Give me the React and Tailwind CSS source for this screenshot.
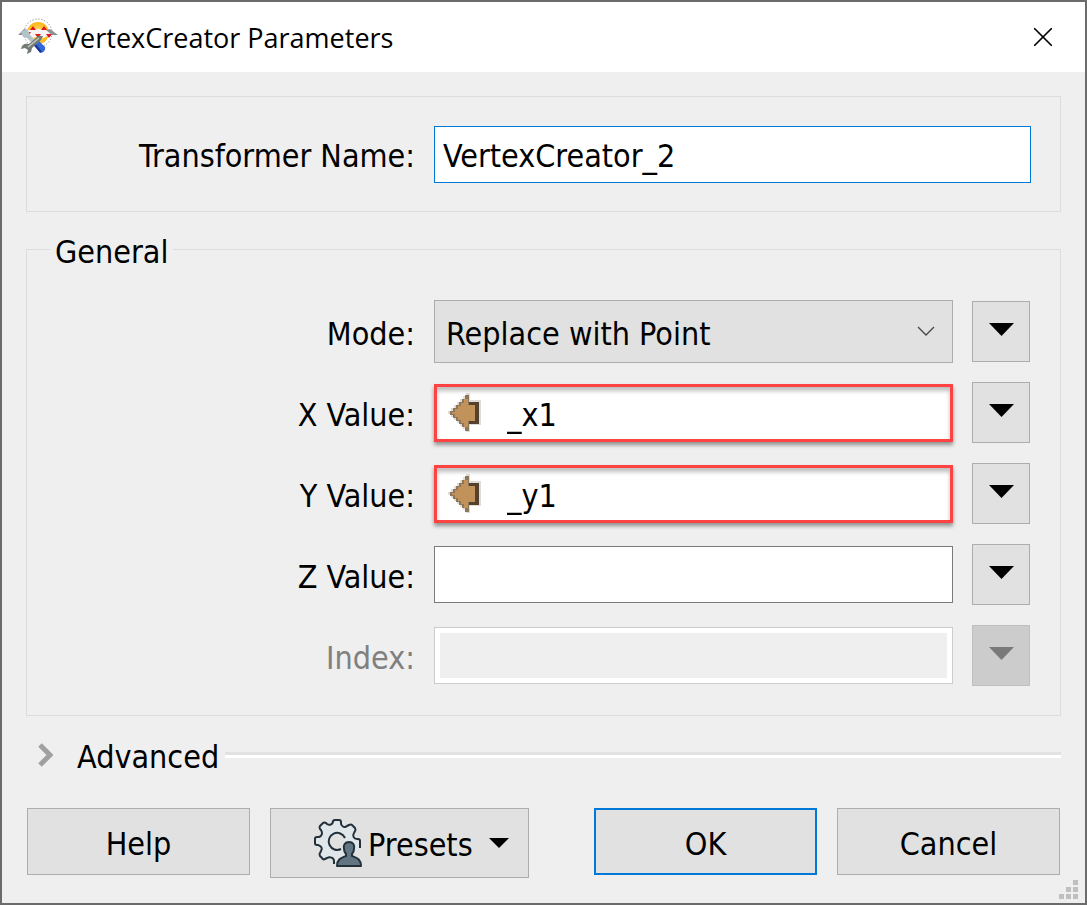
import { useState } from 'react';
import { X } from 'lucide-react';

function TransformerIcon() {
  return (
    <svg width="40" height="38" viewBox="0 0 40 38" aria-hidden="true">
      <defs>
        <radialGradient id="sun">
          <stop offset="0" stopColor="#ffe27a" />
          <stop offset="1" stopColor="#fdb515" />
        </radialGradient>
      </defs>
      <circle cx="20" cy="15" r="14" fill="#fff" stroke="#777" strokeWidth="1" strokeDasharray="1 2" />
      <circle cx="20" cy="15" r="11" fill="url(#sun)" />
      <path d="M1 17l7-5 6 0 6-1 7 1 5 0 7 5-9 1-5 2-5-2-5 2-5-2z" fill="#f6f4f2" />
      <path d="M0 17l6-6 4 1-4 5zM40 17l-8-6-4 1 6 5z" fill="#8d9391" />
      <path d="M12 12l3-4 3 4zM23 12l3-4 3 4zM8 14h5l-2 3zM17 16h6l-3 4zM28 16h6l-3 4z" fill="#e0141c" />
      <path d="M3 14l5-3 3 3 1 3 9 9-3 3-9-9-4-1-1-3z" fill="#b4c3c9" />
      <path d="M15 25l4-4 8 8c1 3-2 6-5 6z" fill="#3566d6" />
      <path d="M16 26l7 8" stroke="#16349c" strokeWidth="2" />
      <path d="M25 18l-2 4-9 8-1 4-4 2 1-4-3-2-4 1c1-5 4-6 8-5l9-8z" fill="#747a74" />
      <path d="M21 20L10 29" stroke="#c3c8c0" strokeWidth="1.500" />
    </svg>
  );
}

function AttributeArrow() {
  return (
    <svg width="33" height="40" viewBox="0 0 33 40" shapeRendering="crispEdges" aria-hidden="true">
      <path
        d="M0 18h3v-3h3v-3h3V9h3V6h3V3h3V0h4v7h11v25H22v7h-4v-3h-3v-3h-3v-3H9v-3H6v-3H3v-3H0z"
        fill="#c9c3bb"
        opacity="0.6"
      />
      <path d="M2 18h3v-3h3v-3h3V9h3V6h3V2h4v7h10v22H21v7h-4v-4h-3v-3h-3v-3H8v-3H5v-3H2z" fill="#8d765a" />
      <path d="M21 9h10v22H21v-3h6V12h-6z" fill="#54412e" />
      <path d="M4 19h3v-3h3v-3h3v-3h3V6h4v6h7v16h-7v6h-4v-4h-3v-3h-3v-3H7v-3H4z" fill="#c19259" />
    </svg>
  );
}

function Triangle({ className = 'w-[25px] h-[13px]' }) {
  return (
    <svg className={className} viewBox="0 0 25 13" preserveAspectRatio="none" aria-hidden="true">
      <path d="M0 0h25L12.500 13z" fill="currentColor" />
    </svg>
  );
}

function PresetsIcon() {
  return (
    <svg width="48" height="48" viewBox="0 0 48 48" fill="none" stroke="#22303a" strokeWidth="2" strokeLinejoin="round" aria-hidden="true">
      <path
        d="M19 43v-3c0-2-4-3-6-1l-2 2q-2 1-4-1l-1-1q-2-2 0-4l1-2c1-3 0-5-3-5H3q-2 0-2-2v-5q0-2 2-2h2c3 0 4-3 2-6l-2-2q-1-2 0-3l3-2q2-1 4 0l1 1c3 1 6 0 6-3V3q0-2 2-2h4q2 0 2 2v2c0 3 3 4 6 2l2-2q2-1 4 1l1 2q2 2 0 4l-1 1c-2 3-1 6 2 6h2q2 0 2 2v7l-4 6-14 8z"
        fill="#dfe7ea"
        stroke="none"
      />
      <path d="M20 45v-3c0-3-4-5-7-3l-2 1q-2 1-3-1l-2-2q-1-2 0-3l1-2c2-3 0-5-3-6H3q-2 0-2-2v-4q0-2 2-2h2c3-1 4-4 2-7l-1-1q-1-2 0-3l3-3q1-1 3 0l1 1c3 2 6 0 6-3V3q0-2 2-2h4q2 0 2 2v2c1 3 4 4 6 2l2-1q2-1 3 0l3 3q1 2 0 3l-1 2c-2 3 0 6 3 6h1q2 0 2 2v7" />
      <path d="M31 19a8.500 8.500 0 1 0-4 11" fill="#e1e1e1" />
      <path
        d="M35 23c-4 0-6 3-5 7 0 3 1 4 2 5v2c-5 2-9 3-9 10h24c0-7-4-8-9-10v-2c1-1 2-2 2-5 1-4-1-7-5-7z"
        fill="#617682"
      />
    </svg>
  );
}

function Row({ id, label, disabled, children }) {
  return (
    <div className="flex items-center h-[63px]">
      <label
        htmlFor={id}
        className={`w-[388px] shrink-0 pt-1 text-right ${disabled ? 'text-[#808080]' : 'text-black'}`}
      >
        {label}
      </label>
      <div className="flex-1 min-w-0 mx-[19px]">{children}</div>
      <button
        type="button"
        disabled={disabled}
        aria-label={`${label} options`}
        className={`w-[58px] h-[61px] shrink-0 border flex justify-center items-center pb-1 ${
          disabled ? 'bg-[#cccccc] border-[#bfbfbf] text-[#7a7a7a]' : 'bg-[#e1e1e1] border-[#adadad] text-black'
        }`}
      >
        <Triangle />
      </button>
    </div>
  );
}

// Field whose value comes from an attribute
function AttributeField({ id, value, onChange }) {
  return (
    <div className="flex items-center h-[58px] pl-[11px] bg-white border-3 border-[#ff4343] shadow-[0_3px_4px_rgba(0,0,0,0.4),inset_0_4px_4px_rgba(0,0,0,0.25)]">
      <AttributeArrow />
      <input
        id={id}
        value={value}
        onChange={onChange}
        className="flex-1 min-w-0 h-full pt-1 ml-[26px] bg-transparent outline-none"
      />
    </div>
  );
}

export default function App() {
  const [form, setForm] = useState({
    name: 'VertexCreator_2',
    mode: 'Replace with Point',
    x: '_x1',
    y: '_y1',
    z: '',
  });

  const set = (key) => (e) => setForm((f) => ({ ...f, [key]: e.target.value }));

  return (
    <div className="min-h-screen flex flex-col bg-[#efefef] border-2 border-[#6b6b6b] text-black text-[32px] leading-9 font-['DejaVu_Sans_Condensed','Noto_Sans',sans-serif]">
      {/* Title bar */}
      <header className="h-[70px] flex items-center bg-white pl-4 pr-[30px]">
        <TransformerIcon />
        <h1 className="ml-[6px] pt-0.5 text-[27px] font-['Open_Sans',sans-serif]">VertexCreator Parameters</h1>
        <button type="button" aria-label="Close" className="ml-auto">
          <X size={24} viewBox="4 4 16 16" strokeWidth={1.25} className="p-px" />
        </button>
      </header>

      <form className="relative flex-1 flex flex-col px-6 py-6" onSubmit={(e) => e.preventDefault()}>
        {/* Name */}
        <div className="flex items-center h-[116px] border border-[#dcdcdc] pr-[29px]">
          <label htmlFor="name" className="w-[388px] shrink-0 pt-1 text-right">
            Transformer Name:
          </label>
          <input
            id="name"
            value={form.name}
            onChange={set('name')}
            className="flex-1 min-w-0 ml-[19px] h-[57px] px-2 pt-1 bg-white border border-[#0078d7] outline-none"
          />
        </div>

        {/* General */}
        <fieldset className="min-w-0 mt-4 border border-[#dcdcdc] pr-[30px] pb-7">
          <legend className="ml-[23px] px-[5px] pt-[6px]">General</legend>
          <div className="pt-[30px] flex flex-col gap-[18px]">
            <Row id="mode" label="Mode:">
              <div className="relative">
                <select
                  id="mode"
                  value={form.mode}
                  onChange={set('mode')}
                  className="w-full h-[63px] pl-[11px] pt-1 appearance-none bg-[#e1e1e1] border border-[#adadad] outline-none"
                >
                  <option>Replace with Point</option>
                  <option>Add Point</option>
                </select>
                <svg
                  className="absolute right-[18px] top-[26px] pointer-events-none"
                  width="18"
                  height="11"
                  viewBox="0 0 18 11"
                  fill="none"
                  stroke="#444"
                  strokeWidth="1.250"
                  aria-hidden="true"
                >
                  <path d="M1 1l8 8 8-8" />
                </svg>
              </div>
            </Row>
            <Row id="x" label="X Value:">
              <AttributeField id="x" value={form.x} onChange={set('x')} />
            </Row>
            <Row id="y" label="Y Value:">
              <AttributeField id="y" value={form.y} onChange={set('y')} />
            </Row>
            <Row id="z" label="Z Value:">
              <input
                id="z"
                value={form.z}
                onChange={set('z')}
                className="block w-full h-[57px] px-2 pt-1 bg-white border border-[#7a7a7a] outline-none"
              />
            </Row>
            <Row id="index" label="Index:" disabled>
              <div className="h-[57px] p-[5px] bg-white border border-[#cccccc]">
                <input id="index" disabled className="block w-full h-full bg-[#efefef]" />
              </div>
            </Row>
          </div>
        </fieldset>

        {/* Advanced */}
        <button type="button" className="mt-[21px] flex items-center text-left">
          <svg className="ml-3 mr-6" width="15" height="24" viewBox="0 0 15 24" fill="none" aria-hidden="true">
            <path d="M2 2l10 10L2 22" stroke="#a0a0a0" strokeWidth="5" />
          </svg>
          <span className="h-9 pt-0.5">Advanced</span>
          <span className="flex-1 ml-[6px] h-[6px] bg-white border-t-3 border-[#e2e2e2]" />
        </button>

        {/* Buttons */}
        <div className="mt-[35px] flex items-start gap-5 px-px">
          <button type="button" className="w-[223px] h-[67px] pt-1 bg-[#e1e1e1] border border-[#adadad]">
            Help
          </button>
          <button
            type="button"
            className="w-[259px] h-[70px] bg-[#e1e1e1] border border-[#adadad] flex items-center pl-[43px]"
          >
            <PresetsIcon />
            <span className="ml-[6px] pt-1">Presets</span>
            <Triangle className="ml-4 w-5 h-[10px]" />
          </button>
          <button type="submit" className="ml-auto w-[223px] h-[67px] pt-1 bg-[#e1e1e1] border-2 border-[#0078d7]">
            OK
          </button>
          <button type="button" className="w-[223px] h-[67px] pt-1 bg-[#e1e1e1] border border-[#adadad]">
            Cancel
          </button>
        </div>

        {/* Resize grip */}
        <svg className="absolute right-[7px] bottom-1 text-[#bfbfbf]" width="19" height="19" viewBox="0 0 19 19" fill="currentColor" aria-hidden="true">
          <path d="M14 0h5v5h-5zM7 7h5v5H7zM14 7h5v5h-5zM0 14h5v5H0zM7 14h5v5H7zM14 14h5v5h-5z" />
        </svg>
      </form>
    </div>
  );
}
